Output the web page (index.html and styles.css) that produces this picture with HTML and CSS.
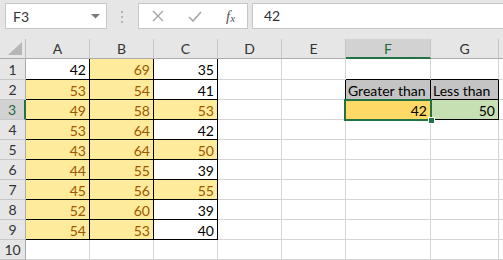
FILE: index.html
```html
<!DOCTYPE html>
<html>
<head>
  <title>Sheet1</title>
  <link rel="stylesheet" href="styles.css">
</head>
<body>
  <div class="toolbar">
    <div class="namebox">
      <span>F3</span>
      <svg class="arrow" width="9" height="5" viewBox="0 0 9 5"><polygon points="0,0 9,0 4.5,4.5" fill="#7a7a7a"/></svg>
    </div>
    <div class="dots">
      <svg width="3" height="12" viewBox="0 0 3 12"><rect x="0" y="0" width="2" height="2" fill="#b4b4b4"/><rect x="0" y="5" width="2" height="2" fill="#b4b4b4"/><rect x="0" y="10" width="2" height="2" fill="#b4b4b4"/></svg>
    </div>
    <div class="fxbtns">
      <svg class="cancel" width="12" height="12" viewBox="0 0 12 12"><path d="M1 1 L11 11 M11 1 L1 11" stroke="#a6a6a6" stroke-width="1.4" fill="none"/></svg>
      <svg class="enter" width="14" height="11" viewBox="0 0 14 11"><path d="M1 6 L5 10 L13 1" stroke="#a6a6a6" stroke-width="1.6" fill="none"/></svg>
      <span class="fx">f<sub>x</sub></span>
    </div>
    <div class="formula">42</div>
  </div>

  <div class="sheet">
    <!-- column headers -->
    <div class="corner"><svg width="14" height="13" viewBox="0 0 14 13"><polygon points="14,0 14,13 0,13" fill="#b6b6b6"/></svg></div>
    <div class="ch">A</div>
    <div class="ch">B</div>
    <div class="ch">C</div>
    <div class="ch">D</div>
    <div class="ch">E</div>
    <div class="ch active">F</div>
    <div class="ch">G</div>
    <div class="ch last"></div>

    <!-- row 1 -->
    <div class="rh r1">1</div>
    <div class="c r1 box">42</div>
    <div class="c r1 box hi">69</div>
    <div class="c r1 box">35</div>
    <div class="c r1"></div>
    <div class="c r1"></div>
    <div class="c r1 bb"></div>
    <div class="c r1 bb"></div>
    <div class="c r1 last"></div>

    <!-- row 2 -->
    <div class="rh">2</div>
    <div class="c box hi">53</div>
    <div class="c box hi">54</div>
    <div class="c box">41</div>
    <div class="c"></div>
    <div class="c br"></div>
    <div class="c box label">Greater than</div>
    <div class="c box label">Less than</div>
    <div class="c last"></div>

    <!-- row 3 -->
    <div class="rh active">3</div>
    <div class="c box hi">49</div>
    <div class="c box hi">58</div>
    <div class="c box hi">53</div>
    <div class="c"></div>
    <div class="c br"></div>
    <div class="c box gt sel">42</div>
    <div class="c box lt">50</div>
    <div class="c last"></div>

    <!-- row 4 -->
    <div class="rh">4</div>
    <div class="c box hi">53</div>
    <div class="c box hi">64</div>
    <div class="c box">42</div>
    <div class="c"></div><div class="c"></div><div class="c"></div><div class="c"></div><div class="c last"></div>

    <!-- row 5 -->
    <div class="rh">5</div>
    <div class="c box hi">43</div>
    <div class="c box hi">64</div>
    <div class="c box hi">50</div>
    <div class="c"></div><div class="c"></div><div class="c"></div><div class="c"></div><div class="c last"></div>

    <!-- row 6 -->
    <div class="rh">6</div>
    <div class="c box hi">44</div>
    <div class="c box hi">55</div>
    <div class="c box">39</div>
    <div class="c"></div><div class="c"></div><div class="c"></div><div class="c"></div><div class="c last"></div>

    <!-- row 7 -->
    <div class="rh">7</div>
    <div class="c box hi">45</div>
    <div class="c box hi">56</div>
    <div class="c box hi">55</div>
    <div class="c"></div><div class="c"></div><div class="c"></div><div class="c"></div><div class="c last"></div>

    <!-- row 8 -->
    <div class="rh">8</div>
    <div class="c box hi">52</div>
    <div class="c box hi">60</div>
    <div class="c box">39</div>
    <div class="c"></div><div class="c"></div><div class="c"></div><div class="c"></div><div class="c last"></div>

    <!-- row 9 -->
    <div class="rh">9</div>
    <div class="c box hi">54</div>
    <div class="c box hi">53</div>
    <div class="c box">40</div>
    <div class="c"></div><div class="c"></div><div class="c"></div><div class="c"></div><div class="c last"></div>

    <!-- row 10 -->
    <div class="rh">10</div>
    <div class="c"></div><div class="c"></div><div class="c"></div>
    <div class="c"></div><div class="c"></div><div class="c"></div><div class="c"></div><div class="c last"></div>
  </div>
</body>
</html>
```

FILE: styles.css
```css
body {
  margin: 0;
  background-color: #fff;
  font-family: Lato, "Open Sans", sans-serif;
  font-size: 14px;
  color: #000;
  overflow: hidden;
}

.toolbar {
  display: flex;
  align-items: flex-start;
  height: 39px;
  padding: 3px 0 0 5px;
  box-sizing: border-box;
  background-color: #e6e6e6;
}

.namebox {
  display: flex;
  align-items: center;
  justify-content: space-between;
  width: 102px;
  height: 26px;
  padding: 0 6px 0 7px;
  box-sizing: border-box;
  background-color: #fff;
  border: 1px solid #c6c6c6;
  color: #333;
}

.dots {
  display: flex;
  justify-content: center;
  width: 31px;
  padding-top: 8px;
}

.fxbtns {
  display: flex;
  align-items: center;
  width: 110px;
  height: 26px;
  box-sizing: border-box;
  background-color: #fff;
  border: 1px solid #c6c6c6;
}

.cancel {
  margin-left: 13px;
}

.enter {
  margin-left: 24px;
}

.fx {
  margin-left: 24px;
  font-family: "Liberation Serif", serif;
  font-style: italic;
  font-size: 15px;
  color: #555;
}

.fx sub {
  font-size: 11px;
  vertical-align: 0;
  position: relative;
  top: 1px;
}

.formula {
  flex: 1;
  height: 26px;
  margin-left: 4px;
  padding-left: 11px;
  line-height: 24px;
  box-sizing: border-box;
  background-color: #fff;
  border: 1px solid #c6c6c6;
  border-right: none;
  color: #333;
}

.sheet {
  display: grid;
  grid-template-columns: 26px 64px 64px 64px 64px 64px 85px 68px 1fr;
  grid-template-rows: 20px 21px repeat(9, 20px);
}

.sheet > div {
  box-sizing: border-box;
}

.corner {
  display: flex;
  align-items: flex-end;
  justify-content: flex-end;
  padding: 0 3px 3px 0;
  background-color: #e6e6e6;
  border-right: 1px solid #bcbcbc;
  border-bottom: 1px solid #ababab;
}

.ch {
  background-color: #e6e6e6;
  border-right: 1px solid #c6c6c6;
  border-bottom: 1px solid #ababab;
  text-align: center;
  line-height: 20px;
  color: #333;
}

.ch.active {
  background-color: #d2d2d2;
  border-bottom: 2px solid #217346;
  color: #1e6b41;
}

.rh {
  background-color: #e6e6e6;
  border-right: 1px solid #ababab;
  border-bottom: 1px solid #c6c6c6;
  text-align: center;
  line-height: 19px;
  color: #333;
}

.rh.active {
  background-color: #d2d2d2;
  border-right: 2px solid #217346;
  color: #1e6b41;
}

.c {
  border-right: 1px solid #d4d4d4;
  border-bottom: 1px solid #d4d4d4;
  text-align: right;
  padding-right: 3px;
  line-height: 21px;
  white-space: nowrap;
}

.r1 {
  line-height: 22px;
}

.last {
  border-right: none;
}

.box {
  border-right-color: #000;
  border-bottom-color: #000;
}

.bb {
  border-bottom-color: #000;
}

.br {
  border-right-color: #000;
}

.hi {
  background-color: #ffeb9c;
  color: #9c5700;
}

.label {
  background-color: #c4c4c4;
  text-align: left;
  padding-left: 2px;
  padding-right: 0;
}

.gt {
  background-color: #ffd966;
}

.lt {
  background-color: #c6e0b4;
}

.sel {
  position: relative;
}

.sel::after {
  content: "";
  position: absolute;
  left: -2px;
  top: -1px;
  right: -2px;
  bottom: -2px;
  border: 2px solid #217346;
}

.sel::before {
  content: "";
  position: absolute;
  right: -5px;
  bottom: -5px;
  width: 5px;
  height: 5px;
  background-color: #217346;
  border: 1px solid #fff;
  z-index: 1;
}
```
